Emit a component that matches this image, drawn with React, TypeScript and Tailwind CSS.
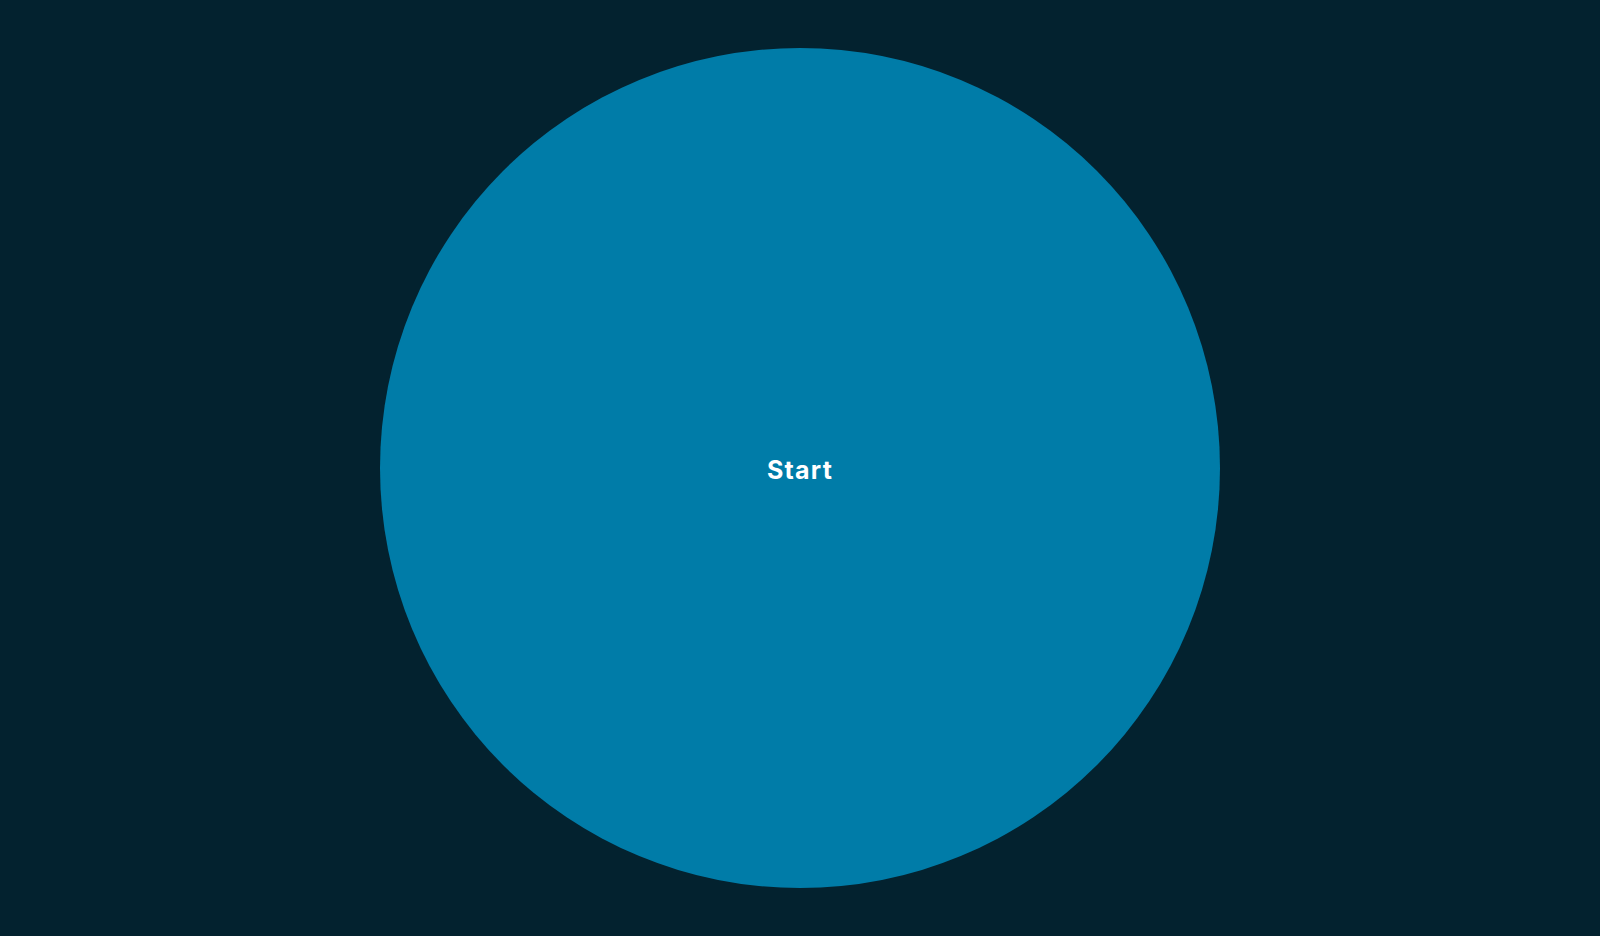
export default function App() {
  return (
    <div className="flex h-screen w-full items-center justify-center bg-[#03222f] font-['Inter',sans-serif]">
      <button className="flex h-[840px] w-[840px] items-center justify-center rounded-full bg-[#007ca8] pt-[6px] text-[25px] font-bold tracking-wider text-white">
        Start
      </button>
    </div>
  );
}
